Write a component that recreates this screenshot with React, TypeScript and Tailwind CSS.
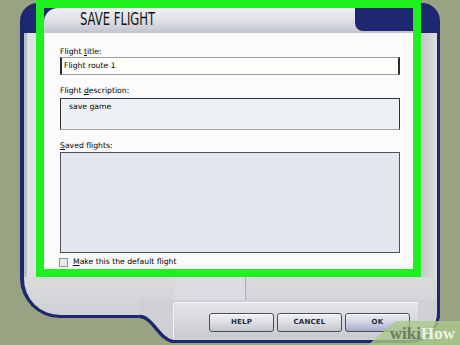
const NAVY = "bg-[#1e2870]";

function DialogButton({ label, primary }: { label: string; primary?: boolean }) {
  return (
    <button
      className={
        "w-[65px] h-[19px] rounded-[3px] border border-[#4a4d57] text-[7px] font-bold tracking-[0.2px] text-[#262b45] shadow-[inset_0_1px_0_#ffffff] " +
        (primary
          ? "bg-gradient-to-b from-[#eceef3] via-[#cfd3e0] to-[#a4abc9]"
          : "bg-gradient-to-b from-[#f1f2f4] via-[#dcdee2] to-[#c3c6cd]")
      }
    >
      {label}
    </button>
  );
}

export default function App() {
  return (
    <div
      className="relative w-[460px] h-[345px] overflow-hidden bg-[#99a282]"
      style={{ fontFamily: '"DejaVu Sans", Verdana, sans-serif' }}
    >
      {/* outer frame */}
      <div className={`ml-[20px] mt-[3px] w-[420px] h-[315px] ${NAVY} rounded-t-[18px] rounded-bl-[40px] pl-[4px] pr-[3px] pb-[3px] flex flex-col`}>
        <div className="flex h-[274px]">
          {/* left strip */}
          <div className="w-[12px] flex flex-col">
            <div className="h-[30px]" />
            <div className="flex-1 bg-[#dfe0e3] border-l-[3px] border-[#b9bcc4]" />
          </div>

          {/* highlighted dialog panel */}
          <div className="w-[385px] h-[277px] -mt-[3px] border-[8px] border-[#1ff01f] bg-[#fbfbfb] flex flex-col">
            <div className="flex h-[23px] bg-[#c9ccd3]">
              <div className={`flex-1 ${NAVY}`}>
                <div className="h-full rounded-tl-[14px] bg-gradient-to-b from-[#f0f1f4] via-[#e0e2e7] to-[#c6c9d1] flex items-center pl-[36px]">
                  <span
                    className="inline-block origin-left scale-x-[0.76] text-[17px] leading-none text-[#141414] whitespace-nowrap"
                    style={{ fontFamily: '"DejaVu Sans Condensed", "DejaVu Sans", sans-serif' }}
                  >
                    SAVE FLIGHT
                  </span>
                </div>
              </div>
              <div className={`w-[58px] ${NAVY} rounded-bl-[8px]`} />
            </div>
            <div className="h-[2px] bg-[#c3c6cd]" />

            <div className="flex flex-col pl-[16px] pr-[13px] text-[7.7px] leading-[10px] text-black">
              <div className="mt-[14px] h-[10px]">
                Flight <u>t</u>itle:
              </div>
              <div className="h-[18px] bg-[#fdfdf9] border-y border-y-[#9a9da3] border-x-2 border-x-[#2b2b2b] flex items-center pl-[2px]">
                Flight route 1
              </div>

              <div className="mt-[11px] h-[10px]">
                Flight <u>d</u>escription:
              </div>
              <div className="mt-[2px] h-[32px] bg-[#edf0f4] border border-[#333] border-b-[#a0a3a9] pl-[8px] pt-[3px]">
                save game
              </div>

              <div className="mt-[11px] h-[10px]">
                <u>S</u>aved flights:
              </div>
              <div className="mt-[1px] h-[101px] bg-[#e3e8f0] border border-[#4d5058]" />

              <div className="mt-[4px] h-[10px] flex items-center gap-[5px] -ml-[1px]">
                <div className="w-[9px] h-[9px] border border-[#8f939c] bg-[#e6e9ef]" />
                <span>
                  <u>M</u>ake this the default flight
                </span>
              </div>
            </div>
          </div>

          {/* right strip */}
          <div className="w-[16px] flex flex-col">
            <div className="h-[30px]" />
            <div className="flex-1 bg-gradient-to-r from-[#c4c6cb] to-[#dedfe2]" />
          </div>
        </div>

        {/* lower frame area */}
        <div className="flex-1 bg-gradient-to-b from-[#dadbdd] to-[#cfd0d3] rounded-bl-[36px]">
          <div className="ml-[151px] w-[71px] h-[25px] bg-[#dcdde0] border-r border-b border-[#a9acb2]" />
        </div>
      </div>

      {/* button bar */}
      <div className="-mt-[18px] ml-[140px] w-[300px] h-[43px] flex">
        <svg width="33" height="43" viewBox="0 0 33 43" className="shrink-0">
          <path d="M0 0 H33 V41 C20 40 12 16.5 0 16.5 Z" fill="#cfd0d3" />
          <path d="M0 16.5 C12 16.5 20 40 33 41.5" fill="none" stroke="#1e2870" strokeWidth="3.5" />
        </svg>
        <div className="flex-1 bg-[#cfd0d4] border-b-[3px] border-r-[3px] border-[#1e2870] rounded-br-[30px]">
          <div className="mt-[2px] w-[245px] h-[36px] rounded-tl-[3px] border-t border-l border-[#f2f2f3] bg-gradient-to-b from-[#e4e5e8] to-[#c9cbd0] flex gap-[3px] pl-[35px] pt-[10px]">
            <DialogButton label="HELP" />
            <DialogButton label="CANCEL" />
            <DialogButton label="OK" primary />
          </div>
        </div>
      </div>

      {/* watermark */}
      <div className="absolute right-0 bottom-0 w-[92px] h-[24px] bg-[#a9c98a]/80 [clip-path:polygon(30%_0,100%_0,100%_100%,0_100%)] flex items-center justify-end pr-[5px]">
        <span
          className="text-[17px] font-bold leading-none"
          style={{ fontFamily: '"Liberation Serif", serif' }}
        >
          <span className="text-[#6f7a63]">wiki</span>
          <span className="text-[#eef3e8]">How</span>
        </span>
      </div>
    </div>
  );
}
